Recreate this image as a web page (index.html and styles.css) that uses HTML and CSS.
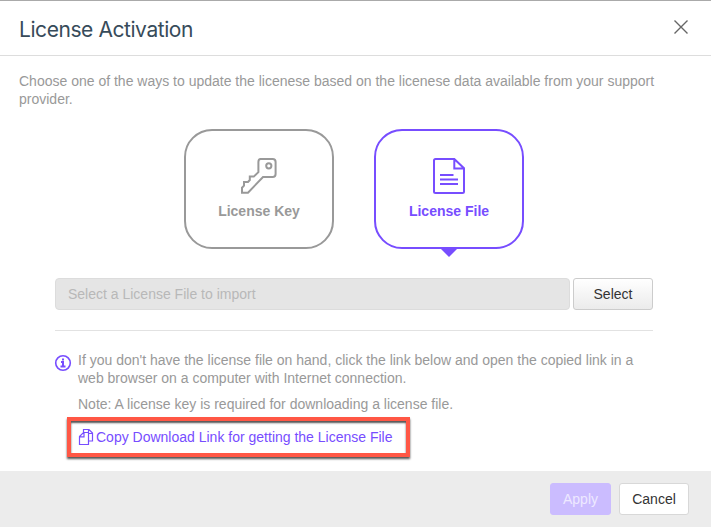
FILE: index.html
```html
<!DOCTYPE html>
<html lang="en">
<head>
<meta charset="utf-8">
<title>License Activation</title>
<link rel="stylesheet" href="styles.css">
</head>
<body>
<div class="dialog">
  <header class="header">
    <h1 class="title">License Activation</h1>
    <svg class="close" width="16" height="16" viewBox="0 0 16 16"><path d="M1.5 1.5l13 13M14.5 1.5l-13 13"/></svg>
  </header>
  <main class="content">
    <p class="intro">Choose one of the ways to update the licenese based on the licenese data available from your support provider.</p>
    <div class="cards">
      <div class="card">
        <svg class="card-icon" width="40" height="40" viewBox="0 0 40 40"><path d="M21.6 4h12q3 0 3 3v12q0 3-3 3H24L9 37.700H3v-5l2-2V27h4l1.800-2v-3.400h4l4.600-4.500V7q0-3 2.200-3z"/><circle cx="29.800" cy="10.800" r="2.600"/></svg>
        <span class="card-label">License Key</span>
      </div>
      <div class="card active">
        <svg class="card-icon" width="40" height="40" viewBox="0 0 40 40"><path d="M6.600 4h18.700l9.700 9.300v23.200q0 1.500-1.600 1.500H6.600Q5 38 5 36.500V5.500Q5 4 6.600 4zM25.300 4v9.500H35M11 20h13.500M11 24.500h18M11 29h18"/></svg>
        <span class="card-label">License File</span>
      </div>
    </div>
    <div class="picker">
      <div class="field">Select a License File to import</div>
      <button class="button select">Select</button>
    </div>
    <div class="help">
      <svg class="info" width="18" height="18" viewBox="0 0 18 18"><circle cx="9" cy="9" r="7.300"/><path class="info-mark" d="M9 4.500v2M7 8h2v4.700M6.500 12.500h5"/></svg>
      <div class="help-text">
        <p class="hint">If you don't have the license file on hand, click the link below and open the copied link in a web browser on a computer with Internet connection.</p>
        <p class="note">Note: A license key is required for downloading a license file.</p>
      </div>
    </div>
    <div class="highlight">
      <svg class="copy" width="16" height="18" viewBox="0 0 16 18"><path d="M5.500 4.500V1.500h5.500l3.500 3.500v8h-4M10.500 1.500v4h4M1.500 8.500l4-4h5v12h-9zM6 4.500v4.300H1.500"/></svg>
      <a class="link">Copy Download Link for getting the License File</a>
    </div>
  </main>
  <footer class="footer">
    <button class="button apply">Apply</button>
    <button class="button cancel">Cancel</button>
  </footer>
</div>
</body>
</html>
```
FILE: styles.css
```css
* { box-sizing: border-box; }
body {
  margin: 0;
  background: #fff;
  color: #999;
  font: 14px/18px "Liberation Sans", Arial, sans-serif;
}
p { margin: 0; }
svg { fill: none; stroke: currentColor; flex: none; }
.dialog {
  display: flex;
  flex-direction: column;
  height: 527px;
  overflow: hidden;
  border-top: 1px solid #aaa;
}
.header {
  display: flex;
  justify-content: space-between;
  height: 55px;
  padding: 0 22px 0 19px;
  border-bottom: 1px solid #ddd;
}
.title {
  margin: 15px 0 0;
  font: 400 21px/28px Inter, sans-serif;
  letter-spacing: -0.43px;
  color: #374b5a;
}
.close { margin-top: 18px; color: #666; stroke-width: 1.4; }
.content { height: 415px; flex: none; padding: 16px 55px 0; }
.intro { margin: 0 -36px; }
.cards {
  display: flex;
  justify-content: center;
  gap: 40px;
  margin: 21px 0 0 -3px;
}
.card {
  position: relative;
  display: flex;
  flex-direction: column;
  align-items: center;
  width: 150px;
  height: 120px;
  padding-top: 24px;
  border: 2px solid #999;
  border-radius: 28px;
}
.card.active { color: #774dff; border-color: #774dff; }
.card.active::after {
  content: "";
  position: absolute;
  top: 118px;
  left: 65px;
  border: solid transparent;
  border-width: 8px 8px 0;
  border-top-color: #774dff;
}
.card-icon { stroke-width: 2; }
.card-label { margin-top: 7px; font-weight: 700; }
.picker {
  display: flex;
  gap: 3px;
  width: 598px;
  height: 53px;
  margin-top: 29px;
  border-bottom: 1px solid #e2e2e2;
}
.field {
  width: 515px;
  height: 32px;
  padding: 6px 12px;
  border: 1px solid #dcdcdc;
  border-radius: 4px;
  background: #e5e5e5;
  color: #b8b8b8;
}
.button {
  height: 32px;
  padding: 0;
  border: 1px solid #ccc;
  border-radius: 3px;
  font: inherit;
  color: #333;
}
.select { width: 80px; background: linear-gradient(#fff, #ebebeb); }
.help { display: flex; gap: 6px; margin-top: 20px; }
.info { margin: 3px 0 0 -1px; color: #774dff; stroke-width: 1.6; }
.info-mark { stroke-width: 2; }
.note { margin-top: 8px; }
.highlight {
  display: flex;
  align-items: center;
  width: 343px;
  height: 40px;
  margin: 4px 0 0 12px;
  padding-left: 7px;
  border: 4px solid #ff5745;
  box-shadow: 0 2px 2px #555, inset 0 2px 2px #555;
  color: #774dff;
}
.copy { stroke-width: 1.2; }
.link { margin-left: 2px; }
.footer {
  display: flex;
  justify-content: flex-end;
  gap: 8px;
  flex: 1;
  padding: 12px 22px 0 0;
  background: #ececec;
}
.apply { width: 61px; border-color: #cbbcff; background: #cbbcff; color: #eee9ff; }
.cancel { width: 70px; background: #fff; border-color: #d8d8d8; }
```
